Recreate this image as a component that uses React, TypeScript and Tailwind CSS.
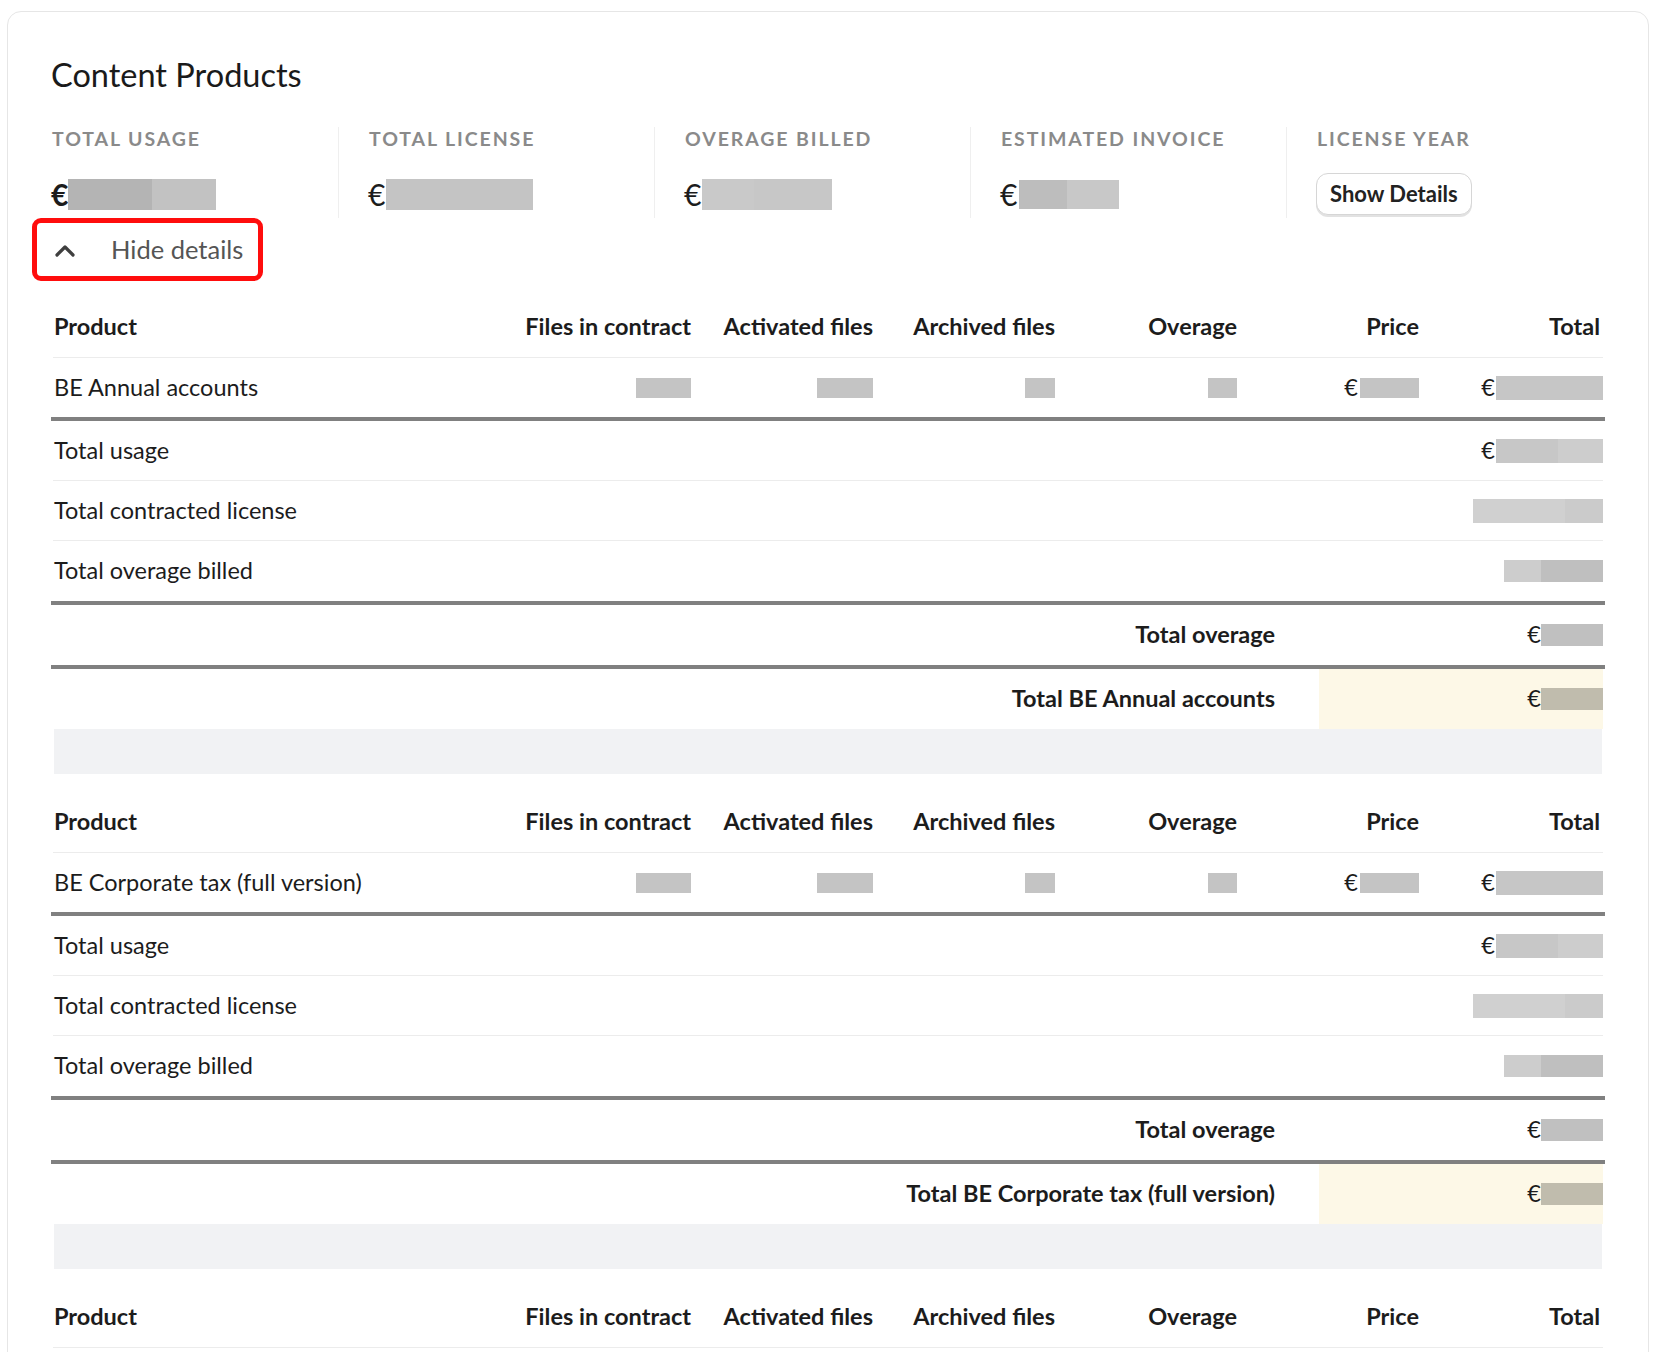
import React from 'react';

// redacted value placeholder
function Box({ className }: { className: string }) {
  return <span className={`block ${className}`} />;
}

function Euro({ children, className = '' }: { children: React.ReactNode; className?: string }) {
  return (
    <span className={`flex items-center justify-end ${className}`}>
      <span className="leading-none">€</span>
      {children}
    </span>
  );
}

const columns = ['Files in contract', 'Activated files', 'Archived files', 'Overage', 'Price', 'Total'];

const gridCols = 'grid grid-cols-[1fr_182px_182px_182px_182px_182px_184px]';

type Product = {
  name: string;
};

const products: Product[] = [
  { name: 'BE Annual accounts' },
  { name: 'BE Corporate tax (full version)' },
];

function ThickLine() {
  return <div className="h-[4px] bg-[#808080]" />;
}

function HeaderRow() {
  return (
    <div className={`${gridCols} mx-[2px] h-[61px] items-center border-b border-[#ececec] font-bold`}>
      <div className="pl-[1px]">Product</div>
      {columns.map((c) => (
        <div key={c} className={c === 'Total' ? 'pr-[3px] text-right' : 'text-right'}>
          {c}
        </div>
      ))}
    </div>
  );
}

function ProductBlock({ product, showTotals = true }: { product: Product; showTotals?: boolean }) {
  return (
    <div>
      <HeaderRow />
      <div className={`${gridCols} mx-[2px] h-[59px] items-center`}>
        <div className="pl-[1px]">{product.name}</div>
        <div className="flex justify-end">
          <Box className="h-[20px] w-[55px] bg-[#c4c4c4]" />
        </div>
        <div className="flex justify-end">
          <Box className="h-[20px] w-[56px] bg-[#c4c4c4]" />
        </div>
        <div className="flex justify-end">
          <Box className="h-[20px] w-[30px] bg-[#c4c4c4]" />
        </div>
        <div className="flex justify-end">
          <Box className="h-[20px] w-[29px] bg-[#c4c4c4]" />
        </div>
        <Euro>
          <Box className="ml-[2px] h-[20px] w-[59px] bg-[#c4c4c4]" />
        </Euro>
        <Euro>
          <Box className="ml-[1px] h-[24px] w-[107px] bg-[#c6c6c6]" />
        </Euro>
      </div>
      {showTotals && (
        <>
          <ThickLine />
          <div className="mx-[2px] flex h-[60px] items-center justify-between border-b border-[#ececec]">
            <span className="pl-[1px]">Total usage</span>
            <Euro>
              <span className="ml-[1px] flex h-[24px]">
                <Box className="h-[24px] w-[62px] bg-[#c7c7c7]" />
                <Box className="h-[24px] w-[45px] bg-[#cdcdcd]" />
              </span>
            </Euro>
          </div>
          <div className="mx-[2px] flex h-[60px] items-center justify-between border-b border-[#ececec]">
            <span className="pl-[1px]">Total contracted license</span>
            <span className="flex h-[24px]">
              <Box className="h-[24px] w-[92px] bg-[#d0d0d0]" />
              <Box className="h-[24px] w-[38px] bg-[#cbcbcb]" />
            </span>
          </div>
          <div className="mx-[2px] flex h-[60px] items-center justify-between">
            <span className="pl-[1px]">Total overage billed</span>
            <span className="flex h-[22px]">
              <Box className="h-[22px] w-[37px] bg-[#cdcdcd]" />
              <Box className="h-[22px] w-[62px] bg-[#bfbfbf]" />
            </span>
          </div>
          <ThickLine />
          <div className="mx-[2px] grid h-[60px] grid-cols-[1fr_284px] items-center font-bold">
            <span className="pr-[44px] text-right">Total overage</span>
            <Euro className="font-normal">
              <Box className="h-[22px] w-[62px] bg-[#c0c0c0]" />
            </Euro>
          </div>
          <ThickLine />
          <div className="mx-[2px] grid h-[60px] grid-cols-[1fr_284px] font-bold">
            <span className="flex items-center justify-end pr-[44px]">Total {product.name}</span>
            <Euro className="bg-[#fdf8e7] font-normal">
              <Box className="h-[22px] w-[62px] bg-[#c0bcad]" />
            </Euro>
          </div>
          <div className="mx-[3px] h-[45px] bg-[#f1f2f4]" />
        </>
      )}
    </div>
  );
}

function Stat({
  label,
  first,
  children,
}: {
  label: string;
  first?: boolean;
  children: React.ReactNode;
}) {
  return (
    <div className={first ? 'w-[287px]' : 'w-[316px] border-l border-[#efefef] pl-[29px]'}>
      <div className="pl-[1px] text-[19.5px] leading-[24px] font-bold tracking-[1.9px] text-[#8a8a8a]">{label}</div>
      <div className="mt-[25px] flex h-[36px] items-center">{children}</div>
    </div>
  );
}

export default function App() {
  return (
    <div className="min-h-screen bg-white pt-[11px] pl-[7px] font-['Lato','Liberation_Sans',sans-serif] text-[#1c1c1c]">
      <div className="w-[1642px] rounded-[14px] border border-[#e6e6e6] px-[43px] pt-[43px] pb-[40px] text-[23.5px]">
        <h1 className="text-[32.5px] leading-[40px] font-normal text-[#1a1a1a]">Content Products</h1>

        {/* Summary */}
        <div className="mt-[32px] flex h-[91px]">
          <Stat label="TOTAL USAGE" first>
            <span className="text-[30px] leading-none font-bold">€</span>
            <span className="flex">
              <Box className="h-[31px] w-[84px] bg-[#b4b4b4]" />
              <Box className="h-[31px] w-[64px] bg-[#c2c2c2]" />
            </span>
          </Stat>
          <Stat label="TOTAL LICENSE">
            <span className="text-[30px] leading-none">€</span>
            <Box className="ml-[1px] h-[31px] w-[147px] bg-[#c4c4c4]" />
          </Stat>
          <Stat label="OVERAGE BILLED">
            <span className="text-[30px] leading-none">€</span>
            <span className="ml-[1px] flex">
              <Box className="h-[31px] w-[52px] bg-[#c9c9c9]" />
              <Box className="h-[31px] w-[78px] bg-[#c7c7c7]" />
            </span>
          </Stat>
          <Stat label="ESTIMATED INVOICE">
            <span className="text-[30px] leading-none">€</span>
            <span className="ml-[2px] flex">
              <Box className="h-[29px] w-[48px] bg-[#bdbdbd]" />
              <Box className="h-[29px] w-[52px] bg-[#c8c8c8]" />
            </span>
          </Stat>
          <Stat label="LICENSE YEAR">
            <button className="h-[42px] rounded-[12px] border border-[#d6d6d6] bg-white px-[13px] text-[22px] leading-none font-bold text-[#222] shadow-[0_2px_0_#e2e2e2]">
              Show Details
            </button>
          </Stat>
        </div>

        {/* Hide details (highlighted) */}
        <div className="ml-[-19px] flex h-[63px] w-[231px] items-center rounded-[9px] border-[5px] border-[#ff0d0d]">
          <button className="flex items-center text-[25.5px] text-[#555]">
            <svg width="24" height="16" viewBox="0 0 24 16" className="ml-[16px]" fill="none">
              <polyline points="4,13 12,5 20,13" stroke="#3f3f3f" strokeWidth="3.2" strokeLinecap="round" strokeLinejoin="round" />
            </svg>
            <span className="ml-[34px] leading-none">Hide details</span>
          </button>
        </div>

        <div className="mt-[16px]">
          <ProductBlock product={products[0]} />
        </div>
        <div className="mt-[18px]">
          <ProductBlock product={products[1]} />
        </div>
        <div className="mt-[18px]">
          <ProductBlock product={{ name: 'BE Personal income tax' }} showTotals={false} />
        </div>
      </div>
    </div>
  );
}
